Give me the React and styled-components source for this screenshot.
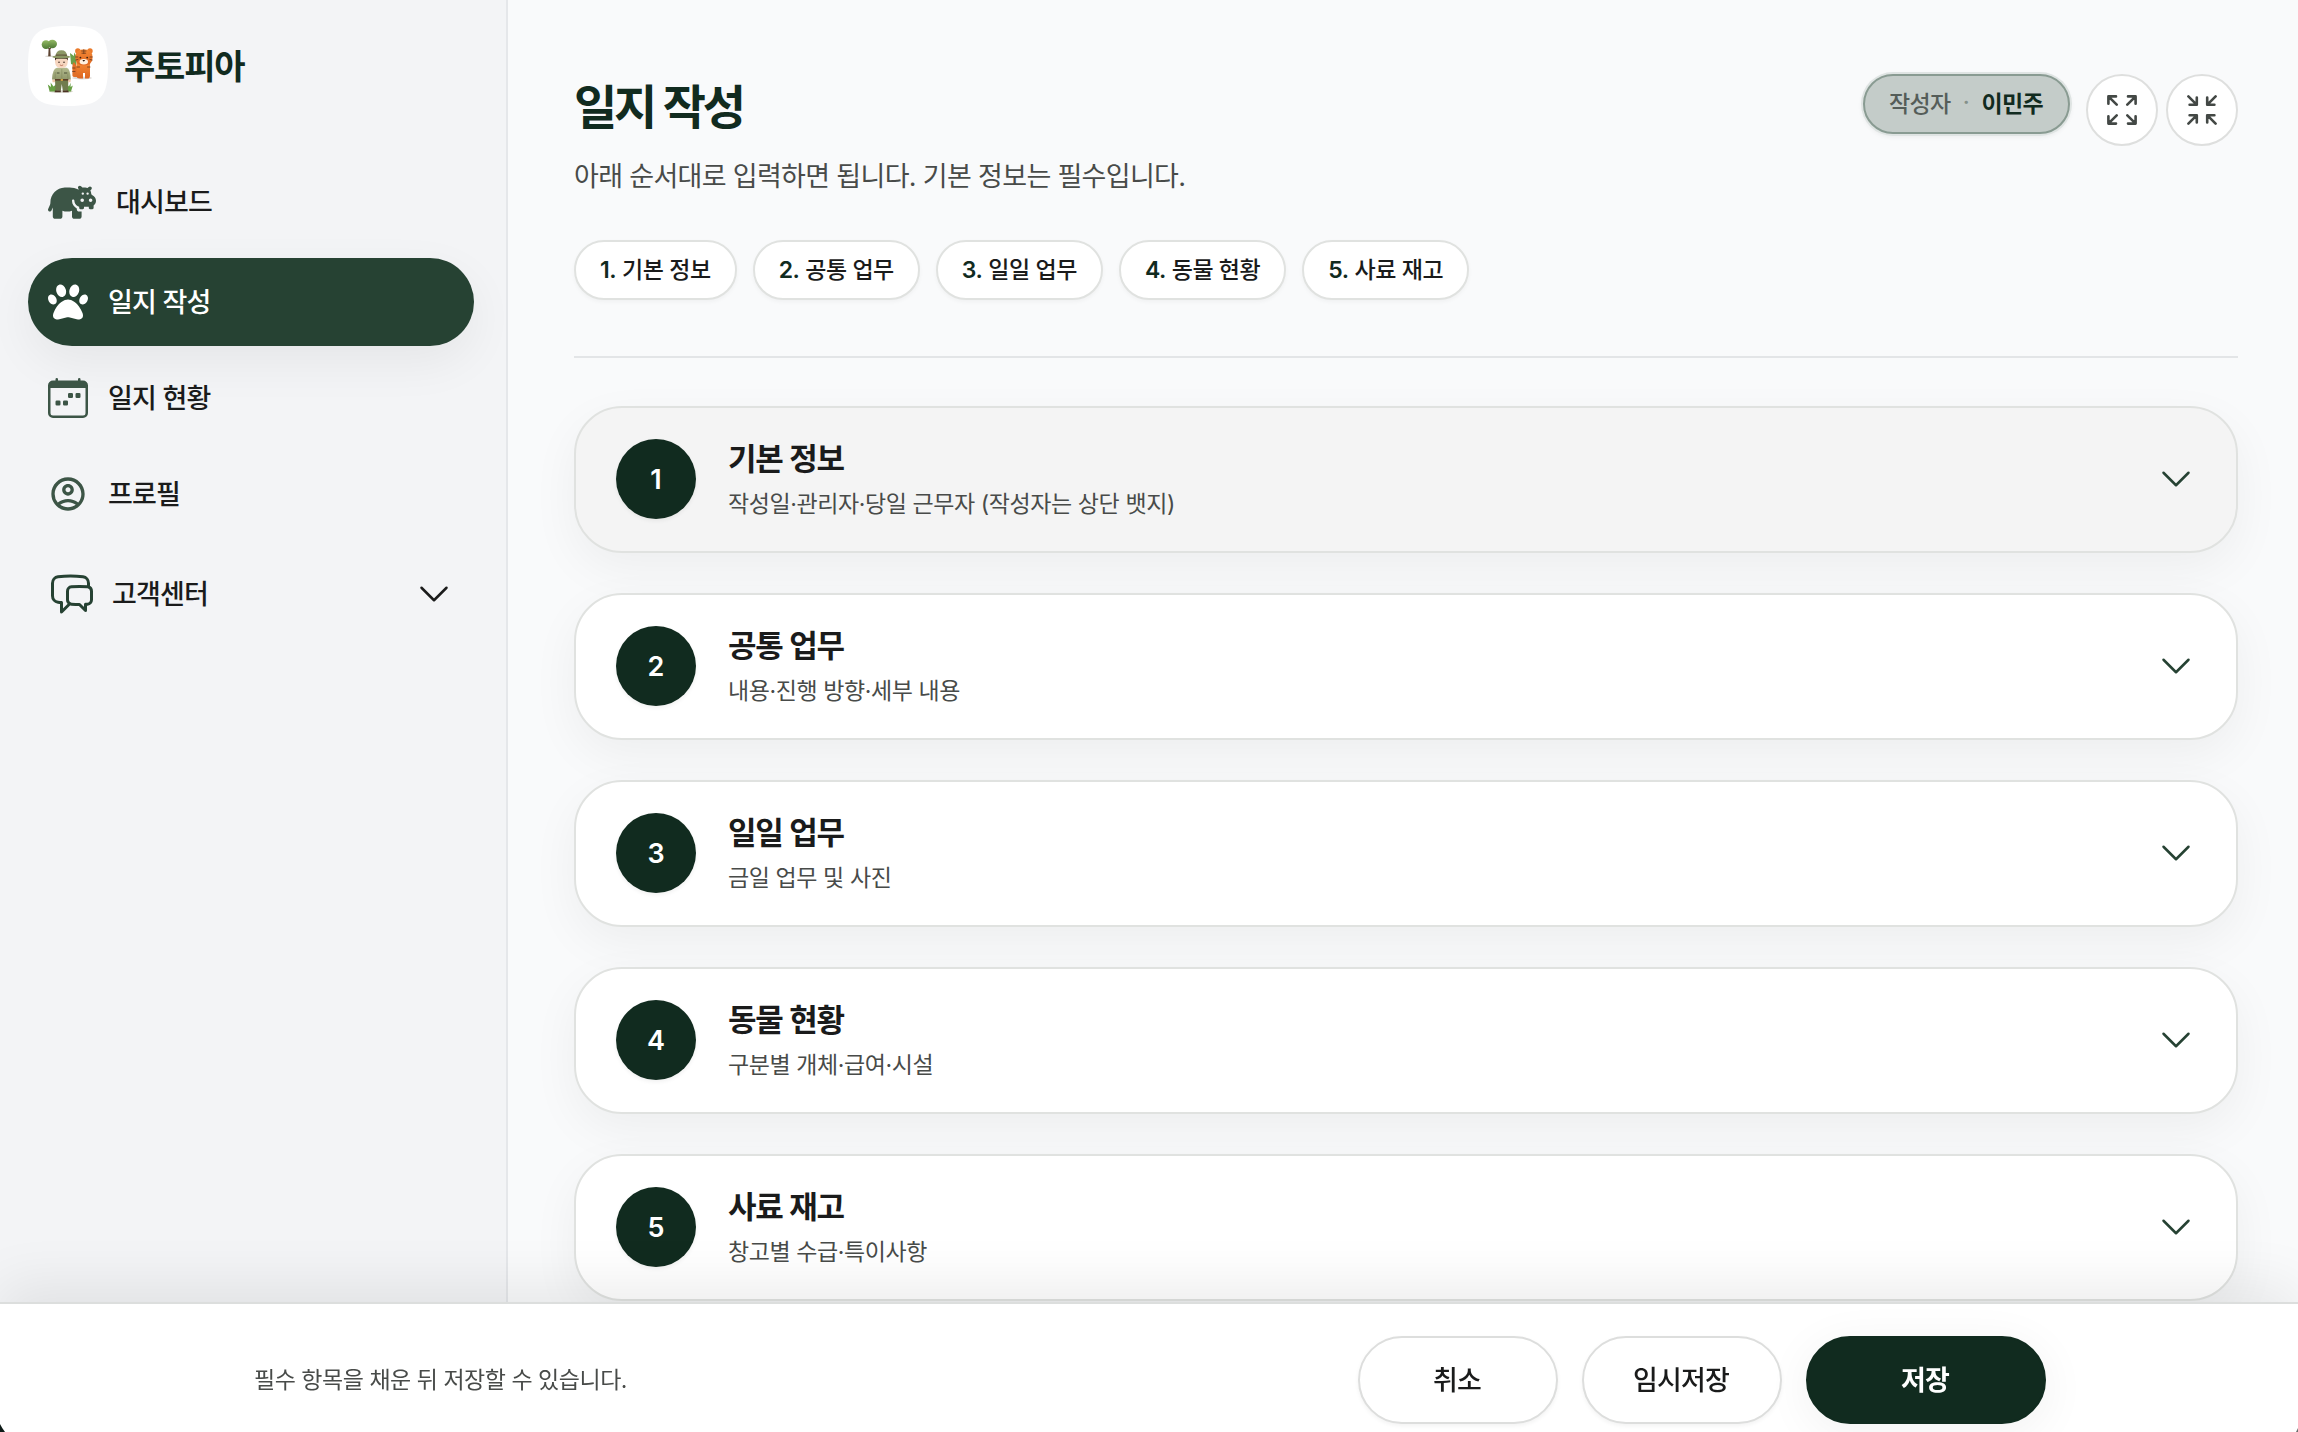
import React from "react";
import styled, { createGlobalStyle, css } from "styled-components";
import { FaHippo, FaPaw } from "react-icons/fa6";
import { BsCalendarWeek } from "react-icons/bs";
import { MdOutlineAccountCircle } from "react-icons/md";
import { HiOutlineChatBubbleLeftRight, HiOutlineChevronDown } from "react-icons/hi2";

const color = {
  forest: "#112b1f",
  pine: "#264233",
  moss: "#3c5546",
  ink: "#1a1b1b",
  muted: "#484b49",
  line: "#e0e2e0",
};

const GlobalStyle = createGlobalStyle`
  * { box-sizing: border-box; }
  html, body { margin: 0; padding: 0; }
  body {
    background: #f9fafb;
    color: ${color.ink};
    font-family: Inter, "Noto Sans CJK KR", sans-serif;
    overflow: hidden;
  }
  button { font: inherit; color: inherit; cursor: pointer; margin: 0; }
  h1, h2, p { margin: 0; }
`;

const Shell = styled.div`
  display: flex;
  height: 1432px;
  overflow: hidden;
`;

const Sidebar = styled.aside`
  flex: 0 0 508px;
  padding: 26px 32px 0 28px;
  background: #f3f4f6;
  border-right: 2px solid #e5e7ea;
`;

const Brand = styled.div`
  display: flex;
  align-items: center;
  gap: 16px;
  height: 80px;
  margin-bottom: 48px;
`;

const BrandName = styled.span`
  padding-top: 1px;
  font-size: 34px;
  font-weight: 700;
  line-height: 1;
  letter-spacing: -1.2px;
  color: ${color.forest};
`;

const Nav = styled.nav`
  display: flex;
  flex-direction: column;
  gap: 8px;
`;

const NavItem = styled.button`
  display: flex;
  align-items: center;
  gap: ${(p) => p.$gap || 20}px;
  padding: 0 20px;
  height: ${(p) => p.$height}px;
  border: 0;
  border-radius: 48px;
  text-align: left;
  background: ${(p) => (p.$active ? color.pine : "transparent")};
  color: ${(p) => (p.$active ? "#fff" : color.ink)};
  box-shadow: ${(p) => (p.$active ? "0 16px 48px rgba(0,0,0,.06)" : "none")};
  svg { flex: none; display: block; }
`;

const NavIcon = styled.span`
  display: flex;
  font-size: ${(p) => p.$size || 40}px;
  color: ${(p) => (p.$active ? "#fff" : p.$dark ? color.pine : color.moss)};
`;

const NavLabel = styled.span`
  flex: 1;
  padding-top: 2px;
  font-size: 27px;
  font-weight: 450;
  line-height: 40px;
  letter-spacing: -0.8px;
`;

const Chevron = styled(HiOutlineChevronDown)`
  flex: none;
  font-size: 40px;
  color: ${(p) => p.$tone};
`;

const Main = styled.main`
  flex: 1;
  padding: 74px 60px 0 66px;
`;

const Header = styled.header`
  display: flex;
  justify-content: space-between;
  align-items: flex-start;
  height: 166px;
`;

const Title = styled.h1`
  font-size: 47px;
  font-weight: 600;
  line-height: 66px;
  letter-spacing: -3.2px;
  color: ${color.forest};
`;

const Lead = styled.p`
  margin-top: 16px;
  font-size: 27px;
  line-height: 42px;
  letter-spacing: -0.68px;
  color: ${color.muted};
`;

const Actions = styled.div`
  display: flex;
  align-items: flex-start;
  gap: 8px;
`;

const Author = styled.div`
  display: flex;
  align-items: center;
  justify-content: space-between;
  width: 207px;
  height: 60px;
  padding: 0 25px 4px 24px;
  margin-right: 8px;
  border: 2px solid #899b92;
  border-radius: 30px;
  background: #c4ccc9;
  box-shadow: 0 0 0 2px #dfe4e3, 0 2px 5px 1px rgba(0,0,0,.06);
  font-size: 23px;
  font-weight: 500;
  letter-spacing: -0.7px;
  color: #555d59;
  b { font-weight: 600; color: ${color.forest}; }
  i { font-style: normal; color: #84908a; }
`;

const RoundButton = styled.button`
  display: grid;
  place-items: center;
  width: 72px;
  height: 72px;
  padding: 0;
  border: 2px solid #dedfde;
  border-radius: 50%;
  background: #fff;
  svg {
    width: 30px;
    height: 30px;
    fill: none;
    stroke: #434845;
    stroke-width: 2.6;
    stroke-linecap: round;
    stroke-linejoin: round;
  }
`;

const Steps = styled.nav`
  display: flex;
  gap: 16px;
  padding-bottom: 56px;
  border-bottom: 2px solid #e3e5e7;
`;

const Step = styled.button`
  height: 60px;
  padding: 0 24px 4px;
  border: 2px solid ${color.line};
  border-radius: 30px;
  background: #fff;
  box-shadow: 0 2px 4px rgba(0,0,0,.04);
  font-size: 23px;
  font-weight: 450;
  letter-spacing: -0.42px;
  white-space: nowrap;
  b { font-weight: 600; color: ${color.forest}; }
`;

const Sections = styled.div`
  display: flex;
  flex-direction: column;
  gap: 40px;
  margin-top: 48px;
`;

const Card = styled.section`
  display: flex;
  align-items: center;
  gap: 32px;
  height: 147px;
  padding: 0 40px 1px;
  border: 2px solid ${color.line};
  border-radius: 48px;
  background: ${(p) => (p.$hovered ? "#f4f4f4" : "#fff")};
  box-shadow: 0 16px 48px rgba(0,0,0,.05);
`;

const Num = styled.span`
  flex: none;
  display: grid;
  place-items: center;
  width: 80px;
  height: 80px;
  border-radius: 50%;
  background: ${color.forest};
  box-shadow: 0 2px 4px rgba(0,0,0,.06);
  color: #fff;
  font-size: 27px;
  font-weight: 600;
`;

const CardText = styled.div`
  flex: 1;
`;

const CardTitle = styled.h2`
  font-size: 31px;
  font-weight: 600;
  line-height: 44px;
  letter-spacing: -1.2px;
`;

const CardHint = styled.p`
  margin-top: 5px;
  font-size: 23px;
  line-height: 36px;
  letter-spacing: -0.41px;
  color: ${color.muted};
`;

const Footer = styled.footer`
  position: fixed;
  left: 0;
  right: 0;
  bottom: 0;
  height: 130px;
  border-top: 2px solid #dcdedd;
  background: rgba(255,255,255,.985);
  box-shadow: 0 -16px 56px rgba(0,0,0,.08);
`;

const FooterInner = styled.div`
  display: flex;
  align-items: center;
  gap: 24px;
  width: 1794px;
  margin: 0 auto;
  padding: 32px 0 0 2px;
`;

const FooterNote = styled.p`
  flex: 1;
  padding-bottom: 4px;
  font-size: 23px;
  letter-spacing: -0.48px;
  color: ${color.muted};
`;

const FooterButton = styled.button`
  width: 200px;
  height: 88px;
  padding: 0 2px 3px 0;
  border: 2px solid #dddedd;
  border-radius: 44px;
  background: #fff;
  box-shadow: 0 2px 4px rgba(0,0,0,.05);
  font-size: 27px;
  font-weight: 500;
  letter-spacing: -0.8px;
  ${(p) => p.$primary && css`
    width: 240px;
    border-color: ${color.forest};
    background: ${color.forest};
    color: #fff;
    font-weight: 600;
    box-shadow: 0 8px 48px rgba(0,0,0,.06);
  `}
`;

const WindowCorner = styled.span`
  position: fixed;
  bottom: 0;
  ${(p) => (p.$right ? "right: 0;" : "left: 0;")}
  width: ${(p) => (p.$right ? 2 : 5)}px;
  height: ${(p) => (p.$right ? 4 : 8)}px;
  background: ${(p) => (p.$right ? "#6b6e6d" : "#0d1a17")};
  clip-path: ${(p) => (p.$right ? "polygon(100% 0, 100% 100%, 0 100%)" : "polygon(0 0, 45% 50%, 100% 100%, 0 100%)")};
`;

const Logo = () => (
  <svg width="80" height="80" viewBox="0 0 80 80" aria-hidden="true">
    <defs>
      <linearGradient id="leaf" x1="0" y1="0" x2="0" y2="1">
        <stop offset="0" stopColor="#93b964" />
        <stop offset="1" stopColor="#4f7a35" />
      </linearGradient>
      <linearGradient id="khaki" x1="0" y1="0" x2="0" y2="1">
        <stop offset="0" stopColor="#b3ba8e" />
        <stop offset="1" stopColor="#8f976a" />
      </linearGradient>
      <linearGradient id="fur" x1="0" y1="0" x2="0" y2="1">
        <stop offset="0" stopColor="#f58a35" />
        <stop offset="1" stopColor="#dd6620" />
      </linearGradient>
    </defs>
    <path fill="#fff" d="M0 40C0 8 8 0 40 0S80 8 80 40 72 80 40 80 0 72 0 40Z" />
    <ellipse cx="21.5" cy="30.2" rx="4.5" ry=".8" fill="#d9d5cf" />
    <path d="M20.2 30.2 20.6 23 18.5 20.5 21.5 22 24.6 20 22.3 23.6 22.7 30.2Z" fill="#5c4331" />
    <circle cx="18" cy="18.6" r="4.3" fill="url(#leaf)" />
    <ellipse cx="24.3" cy="18" rx="4.7" ry="4.2" fill="url(#leaf)" />
    <path d="M42 27 46 30 46 26.5 49 31 48 40 43 38Z" fill="#6ba04a" />
    <ellipse cx="54" cy="52" rx="10" ry="1.4" fill="#dcd8d4" />
    <path d="M46 36Q44 38 44.4 43V49.5Q44.5 51 46.5 51H49.5L51 44Z" fill="#e06f28" />
    <path d="M48.5 36V50.5Q49 52.6 52 52.4H55V47H57V52.4H60.5Q62 52 62 50V36Z" fill="url(#fur)" />
    <circle cx="49.8" cy="25" r="2.7" fill="#ea7a2b" />
    <circle cx="62" cy="25" r="2.7" fill="#ea7a2b" />
    <rect x="47.4" y="23.4" width="17" height="15.8" rx="6.8" fill="url(#fur)" />
    <ellipse cx="55.8" cy="35.8" rx="4.2" ry="2.7" fill="#fff1df" />
    <circle cx="52.4" cy="31.6" r=".9" fill="#3a1e10" />
    <circle cx="59.2" cy="31.6" r=".9" fill="#3a1e10" />
    <path d="M54.4 34H57.2L55.8 35.7Z" fill="#2b1710" />
    <path d="M55.8 23.6V27.6M53.6 25H58M53.9 27.2H57.7M47.6 31H49.8M47.8 34 50 33.4M64.3 31H62M64.2 34 61.8 33.4M49 41H51.5M62 41H59.5M44.6 42H47M44.6 45.5H47" stroke="#6b3a1e" strokeWidth=".8" strokeLinecap="round" fill="none" />
    <ellipse cx="33" cy="65.5" rx="12" ry="1.3" fill="#d8d6cc" />
    <path d="M19.8 58.5 23 61 22.6 56.6 25.5 60.5 28.5 58V65.4H21.6Z" fill="#679f43" />
    <path d="M38.5 58 41 60.5 42.6 56.8 42.6 61 44.8 59.4 43 65.4H38.5Z" fill="#679f43" />
    <path d="M27 53H40.4L40 64.8H34.8L33.8 58 32.8 64.8H27.4Z" fill="#717c4d" />
    <path d="M27 64.4H32.8V66.2H26.6ZM34.8 64.4H40.2L40.8 66.2H34.8Z" fill="#4c3325" />
    <path d="M24.2 53.4H27V56.2H24.6ZM40.2 53.4H42.8L42.4 56.2H40.2Z" fill="#efc6a8" />
    <path d="M29 41.8H38.6Q42.4 42.6 42.8 53.6H24Q24.4 42.6 29 41.8Z" fill="url(#khaki)" />
    <path d="M27.2 46V53.6M39.8 46V53.6M33.8 43V53" stroke="#7f875a" strokeWidth=".6" />
    <path d="M28.8 47H31.5M36 47H39" stroke="#4a5136" strokeWidth="1" />
    <rect x="27" y="53" width="13.2" height="1.6" fill="#5b3d27" />
    <rect x="32.7" y="52.9" width="2.2" height="2" fill="#d5a948" />
    <path d="M27 31H39.8V36Q39.4 42 33.4 42T27 36Z" fill="#f6d6c0" />
    <path d="M27 31H39.8V34.6L38.6 32.8H28.4L27 34.6Z" fill="#38241a" />
    <circle cx="31" cy="36.2" r=".75" fill="#2b1b14" />
    <circle cx="36" cy="36.2" r=".75" fill="#2b1b14" />
    <path d="M31.8 38.9Q33.5 40.2 35.2 38.9" stroke="#a6533c" strokeWidth=".7" fill="none" />
    <path d="M27.6 30Q28 24.2 33.4 24.2T39 30Z" fill="#8d9766" />
    <path d="M27.6 28.6H39V30H27.6Z" fill="#5a4a33" />
    <ellipse cx="33.3" cy="30.9" rx="9" ry="1.5" fill="#8a9563" />
  </svg>
);

const ExpandIcon = () => (
  <svg viewBox="0 0 30 30">
    <path d="M1.4 8.8V1.4H9M1.6 1.6 9.7 9.7M21 1.4H28.6V8.8M28.4 1.6 20.3 9.7M1.4 21.2V28.6H9M1.6 28.4 9.7 20.3M28.6 21.2V28.6H21M28.4 28.4 20.3 20.3" />
  </svg>
);

const ShrinkIcon = () => (
  <svg viewBox="0 0 30 30">
    <path d="M9.8 2.6V9.8H2.6M9.6 9.6 1.4 1.4M20.2 2.6V9.8H27.4M20.4 9.6 28.6 1.4M2.6 20.2H9.8V27.4M9.6 20.4 1.4 28.6M27.4 20.2H20.2V27.4M20.4 20.4 28.6 28.6" />
  </svg>
);

const navItems = [
  { label: "대시보드", icon: FaHippo, size: 48, height: 96 },
  { label: "일지 작성", icon: FaPaw, height: 88, active: true },
  { label: "일지 현황", icon: BsCalendarWeek, height: 88 },
  { label: "프로필", icon: MdOutlineAccountCircle, height: 88 },
  { label: "고객센터", icon: HiOutlineChatBubbleLeftRight, size: 48, height: 96, gap: 16, dark: true, expandable: true },
];

const sections = [
  { title: "기본 정보", hint: "작성일·관리자·당일 근무자 (작성자는 상단 뱃지)", hovered: true },
  { title: "공통 업무", hint: "내용·진행 방향·세부 내용" },
  { title: "일일 업무", hint: "금일 업무 및 사진" },
  { title: "동물 현황", hint: "구분별 개체·급여·시설" },
  { title: "사료 재고", hint: "창고별 수급·특이사항" },
];

export default function App() {
  return (
    <>
      <GlobalStyle />
      <Shell>
        <Sidebar>
          <Brand>
            <Logo />
            <BrandName>주토피아</BrandName>
          </Brand>
          <Nav>
            {navItems.map(({ label, icon: Icon, size, height, gap, active, dark, expandable }) => (
              <NavItem key={label} $active={active} $gap={gap} $height={height}>
                <NavIcon $size={size} $active={active} $dark={dark}><Icon /></NavIcon>
                <NavLabel>{label}</NavLabel>
                {expandable && <Chevron $tone={color.ink} />}
              </NavItem>
            ))}
          </Nav>
        </Sidebar>
        <Main>
          <Header>
            <div>
              <Title>일지 작성</Title>
              <Lead>아래 순서대로 입력하면 됩니다. 기본 정보는 필수입니다.</Lead>
            </div>
            <Actions>
              <Author><span>작성자</span><i>·</i><b>이민주</b></Author>
              <RoundButton aria-label="모두 펼치기"><ExpandIcon /></RoundButton>
              <RoundButton aria-label="모두 접기"><ShrinkIcon /></RoundButton>
            </Actions>
          </Header>
          <Steps>
            {sections.map(({ title }, i) => (
              <Step key={title}><b>{i + 1}.</b> {title}</Step>
            ))}
          </Steps>
          <Sections>
            {sections.map(({ title, hint, hovered }, i) => (
              <Card key={title} $hovered={hovered}>
                <Num>{i + 1}</Num>
                <CardText>
                  <CardTitle>{title}</CardTitle>
                  <CardHint>{hint}</CardHint>
                </CardText>
                <Chevron $tone={color.pine} />
              </Card>
            ))}
          </Sections>
        </Main>
      </Shell>
      <Footer>
        <FooterInner>
          <FooterNote>필수 항목을 채운 뒤 저장할 수 있습니다.</FooterNote>
          <FooterButton>취소</FooterButton>
          <FooterButton>임시저장</FooterButton>
          <FooterButton $primary>저장</FooterButton>
        </FooterInner>
      </Footer>
      <WindowCorner />
      <WindowCorner $right />
    </>
  );
}
